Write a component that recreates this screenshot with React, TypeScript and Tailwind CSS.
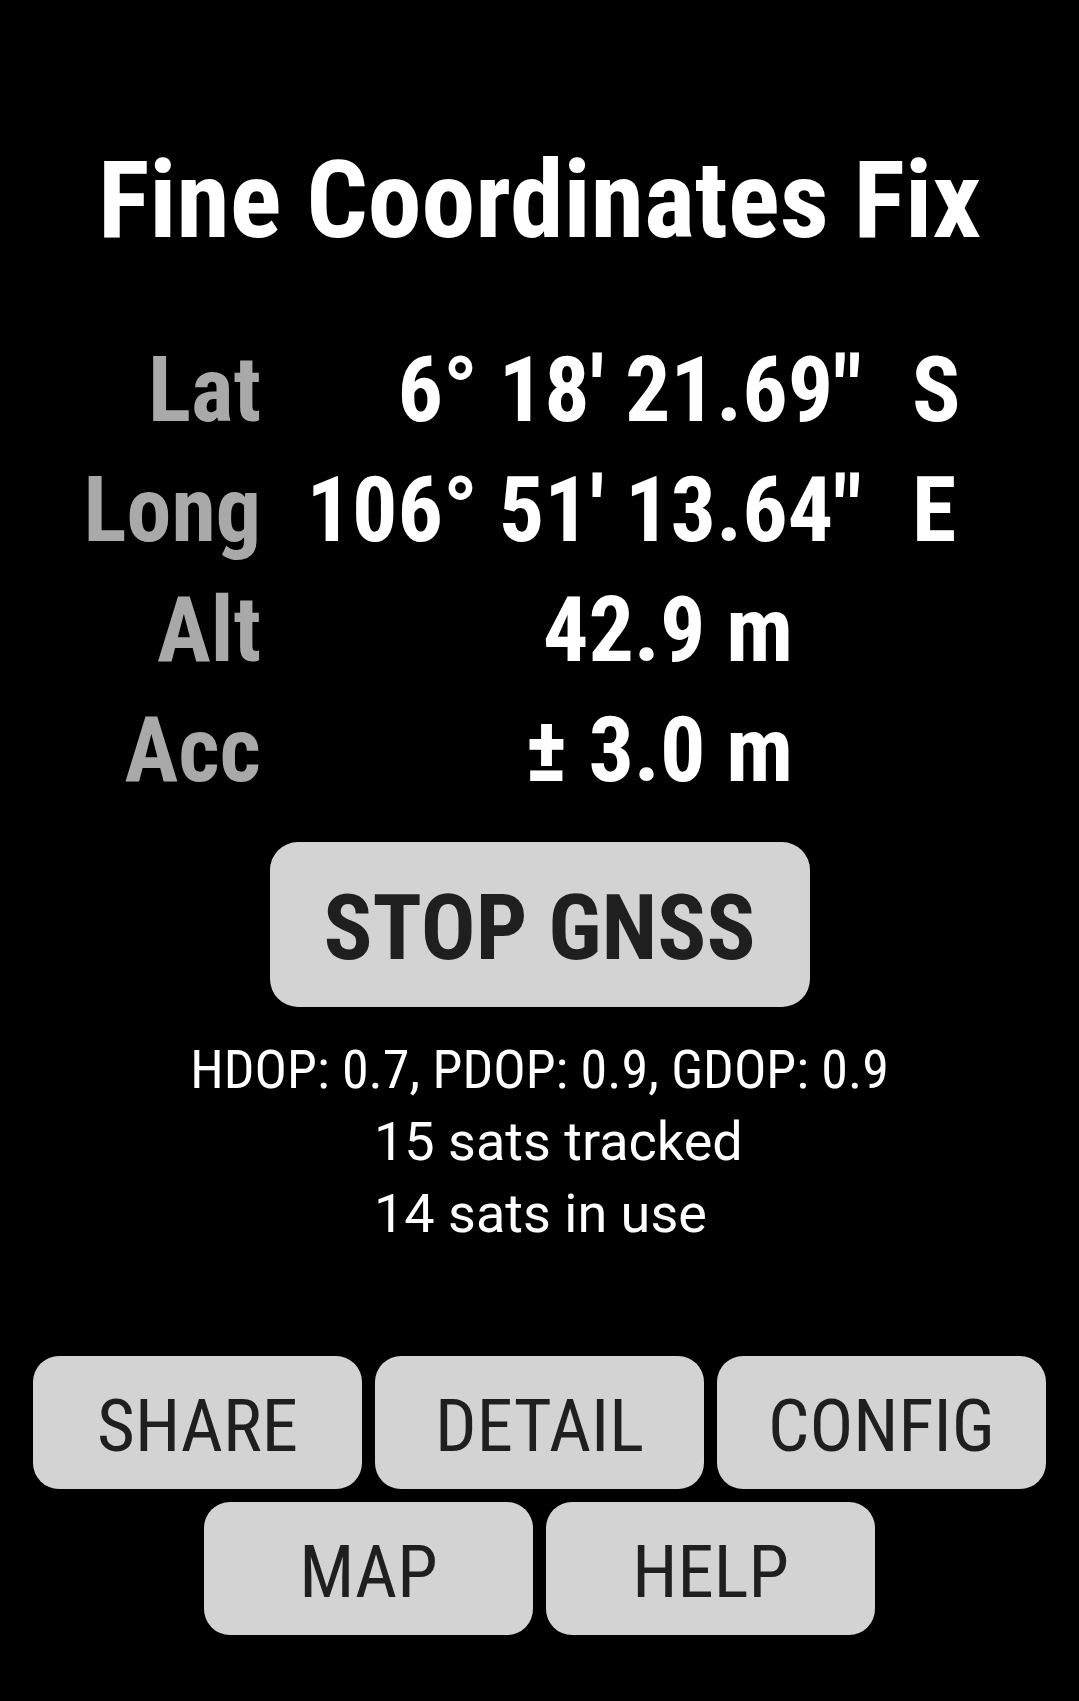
const font = '"Roboto Condensed", Roboto, "Liberation Sans", sans-serif';
const plainFont = 'Roboto, "Liberation Sans", sans-serif';

type Row = {
  label: string;
  value: string;
  dir?: string;
  inset?: boolean;
};

const rows: Row[] = [
  { label: 'Lat', value: '6° 18\' 21.69"', dir: 'S' },
  { label: 'Long', value: '106° 51\' 13.64"', dir: 'E' },
  { label: 'Alt', value: '42.9 m', inset: true },
  { label: 'Acc', value: '± 3.0 m', inset: true },
];

function ActionButton({ label }: { label: string }) {
  return (
    <button className="flex h-[133px] w-[329px] items-center justify-center rounded-[26px] bg-[#d3d3d3] pt-2 text-[73px] leading-none text-[#1f1f1f]">
      {label}
    </button>
  );
}

export default function App() {
  return (
    <div className="flex min-h-[1701px] w-full flex-col bg-black text-white" style={{ fontFamily: font }}>
      <h1 className="mt-[146px] text-center text-[108px] font-bold leading-none">
        Fine Coordinates Fix
      </h1>

      <div className="mt-[77px] grid grid-cols-[261px_601px_auto] font-bold">
        {rows.map((row) => (
          <div key={row.label} className="contents">
            <div className="text-right text-[90px] leading-[120px] text-[#a9a9a9]">{row.label}</div>
            <div className={`text-right text-[90px] leading-[120px] ${row.inset ? 'pr-[69px]' : ''}`}>{row.value}</div>
            <div className="pl-[50px] text-[90px] leading-[120px]">{row.dir}</div>
          </div>
        ))}
      </div>

      <button className="mx-auto mt-[31px] flex h-[165px] w-[540px] items-center justify-center rounded-[28px] bg-[#d3d3d3] pt-2 text-[91px] font-bold leading-none text-[#1f1f1f]">
        STOP GNSS
      </button>

      <div className="mt-[27px] text-[54px] leading-[72px]">
        <div className="text-center">HDOP: 0.7, PDOP: 0.9, GDOP: 0.9</div>
        <div style={{ fontFamily: plainFont }}>
          <div className="pl-[374px]">15 sats tracked</div>
          <div className="pl-[374px]">14 sats in use</div>
        </div>
      </div>

      <div className="mt-[106px] flex flex-col items-center gap-[13px]">
        <div className="flex gap-[13px]">
          <ActionButton label="SHARE" />
          <ActionButton label="DETAIL" />
          <ActionButton label="CONFIG" />
        </div>
        <div className="flex gap-[13px]">
          <ActionButton label="MAP" />
          <ActionButton label="HELP" />
        </div>
      </div>
    </div>
  );
}
